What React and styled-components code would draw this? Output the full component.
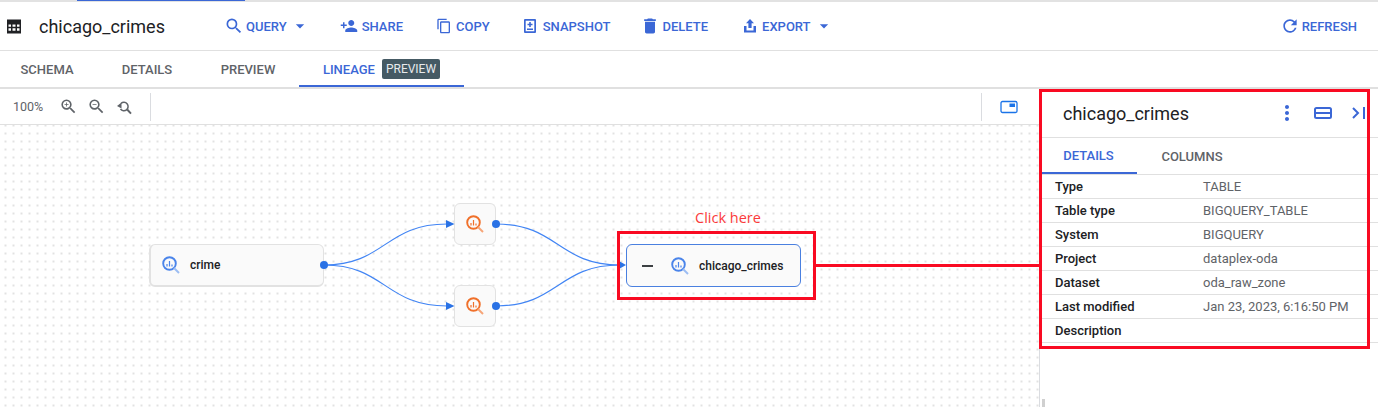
import React from 'react';
import styled, { createGlobalStyle } from 'styled-components';
import {
  MdSearch, MdPersonAdd, MdContentCopy, MdDelete, MdRefresh, MdArrowDropDown,
  MdZoomIn, MdZoomOut, MdMoreVert,
} from 'react-icons/md';

const BLUE = '#3b67d6';
const RED = '#f90a22';

const GlobalStyle = createGlobalStyle`
  html, body { margin: 0; padding: 0; background: #fff; }
  body { font-family: Roboto, "Liberation Sans", sans-serif; overflow: hidden; }
`;

const Page = styled.div`
  width: 1378px;
  height: 407px;
  display: flex;
  flex-direction: column;
  position: relative;
  overflow: hidden;
`;

const TopLine = styled.div`
  height: 2px;
  background: #e2e2e2;
  flex: none;
  &::before {
    content: '';
    display: block;
    width: 168px;
    height: 1px;
    margin-left: 77px;
    background: ${BLUE};
  }
`;

const Toolbar = styled.div`
  height: 48px;
  flex: none;
  display: flex;
  align-items: center;
  border-bottom: 1px solid #e0e0e0;
  padding-left: 7px;
  padding-right: 21px;
`;

const Title = styled.h1`
  margin: 0 60px 0 18px;
  font-size: 18px;
  font-weight: 400;
  color: #202124;
  width: 125px;
  white-space: nowrap;
`;

const ActionBtn = styled.div`
  display: flex;
  align-items: center;
  gap: ${p => p.$gap ?? 2}px;
  color: ${BLUE};
  font-size: 13px;
  font-weight: 500;
  margin-right: ${p => p.$mr ?? 0}px;
  margin-left: ${p => (p.$push ? 'auto' : '0')};
  svg { flex: none; }
`;

const Caret = styled(MdArrowDropDown)`
  margin-left: ${p => p.$ml ?? 1}px;
`;

const Tabs = styled.div`
  height: 36px;
  flex: none;
  display: flex;
  border-bottom: 2px solid #e0e0e0;
`;

const Tab = styled.div`
  height: 36px;
  box-sizing: border-box;
  width: ${p => p.$w}px;
  margin-right: ${p => p.$mr ?? 0}px;
  display: flex;
  align-items: center;
  justify-content: center;
  gap: 7px;
  font-size: 13px;
  font-weight: 500;
  color: ${p => (p.$active ? BLUE : '#5f6368')};
  border-bottom: ${p => (p.$active ? `2px solid ${BLUE}` : 'none')};
  padding-top: ${p => (p.$active ? '2px' : '0')};
`;

const Badge = styled.span`
  background: #455a64;
  color: #e8eaed;
  font-size: 12px;
  font-weight: 400;
  padding: 0 4px;
  height: 20px;
  line-height: 20px;
  border-radius: 2px;
`;

const Body = styled.div`
  flex: 1;
  display: flex;
  min-height: 0;
`;

const Main = styled.div`
  width: 1039px;
  flex: none;
  display: flex;
  flex-direction: column;
`;

const CanvasBar = styled.div`
  height: 35px;
  flex: none;
  display: flex;
  align-items: center;
  border-bottom: 1px solid #e0e0e0;
  padding-left: 13px;
  color: #5f6368;
`;

const Zoom = styled.span`
  font-size: 12.5px;
  color: #5f6368;
  width: 37px;
  margin-right: 4px;
`;

const IconSlot = styled.span`
  width: ${p => p.$w ?? 28}px;
  flex: none;
  display: flex;
  justify-content: center;
  align-items: center;
  margin-left: ${p => p.$ml ?? 0}px;
`;

const BarDivider = styled.span`
  width: 1px;
  height: 28px;
  background: #dadce0;
  margin-left: ${p => p.$ml}px;
`;

const Canvas = styled.div`
  flex: 1;
  position: relative;
  background-color: #fff;
  background-image: radial-gradient(circle at 1px 1px, #e2e2e2 0.9px, transparent 1.2px);
  background-size: 8px 8px;
  background-position: 4.5px -0.5px;
`;

const Node = styled.div`
  position: absolute;
  left: ${p => p.$x}px;
  top: ${p => p.$y}px;
  width: ${p => p.$w}px;
  height: ${p => p.$h}px;
  box-sizing: border-box;
  background: #fafafa;
  border: 1px solid ${p => (p.$selected ? '#4a80e0' : '#e2e2e2')};
  border-bottom-width: ${p => (p.$raised ? 2 : 1)}px;
  border-left-width: ${p => (p.$raised ? 2 : 1)}px;
  border-radius: 6px;
  display: flex;
  align-items: center;
  justify-content: ${p => (p.$center ? 'center' : 'flex-start')};
  font-size: 12px;
  font-weight: 500;
  color: #202124;
`;

const NodeLabel = styled.span`
  margin-left: 10px;
`;

const CrimeIconBox = styled.span`
  display: flex;
  margin-left: 11px;
`;

const Collapse = styled.span`
  width: 11px;
  height: 2px;
  background: #3c4043;
  margin: 0 18px 0 15px;
  flex: none;
`;

const Edges = styled.svg`
  position: absolute;
  left: 0;
  top: 0;
  pointer-events: none;
`;

const Side = styled.aside`
  flex: 1;
  border-left: 1px solid #dadce0;
  display: flex;
  flex-direction: column;
  position: relative;
`;

const SideHead = styled.div`
  height: 49px;
  box-sizing: border-box;
  flex: none;
  display: flex;
  align-items: center;
  border-bottom: 1px solid #e0e0e0;
  padding-left: 23px;
`;

const SideTitle = styled.h2`
  margin: 0;
  font-size: 18px;
  font-weight: 400;
  color: #202124;
  width: 212px;
  flex: none;
`;

const SideTabs = styled.div`
  height: 37px;
  box-sizing: border-box;
  flex: none;
  display: flex;
  border-bottom: 1px solid #e0e0e0;
`;

const SideTab = styled.div`
  width: ${p => p.$w}px;
  height: 36px;
  box-sizing: border-box;
  display: flex;
  align-items: center;
  justify-content: center;
  font-size: 13px;
  font-weight: 500;
  color: ${p => (p.$active ? BLUE : '#5f6368')};
  border-bottom: ${p => (p.$active ? `2px solid ${BLUE}` : 'none')};
`;

const Row = styled.div`
  height: 24px;
  box-sizing: border-box;
  display: flex;
  align-items: center;
  border-bottom: 1px solid #e0e0e0;
  padding-left: 15px;
  font-size: 13px;
`;

const RowKey = styled.span`
  width: 148px;
  flex: none;
  font-weight: 500;
  color: #202124;
`;

const RowValue = styled.span`
  color: #5f6368;
`;

const Scrollbit = styled.div`
  position: absolute;
  left: 2px;
  bottom: 0;
  width: 3px;
  height: 8px;
  background: #d0d0d0;
`;

/* red annotations sit over the screenshot */
const RedBox = styled.div`
  position: absolute;
  left: ${p => p.$x}px;
  top: ${p => p.$y}px;
  width: ${p => p.$w}px;
  height: ${p => p.$h}px;
  box-sizing: border-box;
  border: 3px solid ${RED};
`;

const RedLine = styled.div`
  position: absolute;
  left: 816px;
  top: 264px;
  width: 224px;
  height: 3px;
  background: ${RED};
`;

const ClickHere = styled.div`
  position: absolute;
  left: 695px;
  top: 209px;
  font-family: "Open Sans", "Liberation Sans", sans-serif;
  font-size: 14.5px;
  line-height: 18px;
  color: #fb3a3a;
`;

const TableIcon = () => (
  <svg width="14" height="15" viewBox="0 0 14 15">
    <path fill="#202124" fillRule="evenodd" d="M0 0.500h14v14H0z M1.500 5.500v2.300H4V5.500z M5.500 5.500v2.300h3V5.500z M10 5.500v2.300h2.500V5.500z M1.500 9.300v2.500H4V9.300z M5.500 9.300v2.500h3V9.300z M10 9.300v2.500h2.500V9.300z" />
  </svg>
);

const SnapshotIcon = () => (
  <svg width="12" height="14" viewBox="0 0 12 14">
    <path fill={BLUE} fillRule="evenodd" d="M1 0h10a1 1 0 0 1 1 1v12a1 1 0 0 1-1 1H1a1 1 0 0 1-1-1V1a1 1 0 0 1 1-1z M1.700 1.700v10.600h8.600V1.700z" />
    <path fill={BLUE} d="M5.200 3h1.600v1.700h1.700v1.500H6.800v1.700H5.200V6.200H3.500V4.700h1.700z M3 9.500h6V11H3z" />
  </svg>
);

const ExportIcon = () => (
  <svg width="12" height="14" viewBox="0 0 12 14">
    <path fill={BLUE} d="M6 0l4 4.200H7.600v4.800H4.400V4.200H2z M0 7h2.500v4.500h7V7H12v6.500H0z" />
  </svg>
);

const ResetZoomIcon = () => (
  <svg width="18" height="18" viewBox="0 0 18 18" fill="none" stroke="#5f6368" strokeWidth="1.500">
    <path d="M6 5.500A4.200 4.200 0 1 1 5.500 11" />
    <path d="M12.200 11.500l3.800 4.200" strokeWidth="1.900" />
    <path fill="#5f6368" stroke="none" d="M2 8l4.500-3.500v6z" />
  </svg>
);

const PanelIcon = () => (
  <svg width="18" height="14" viewBox="0 0 18 14">
    <rect x="1" y="1.500" width="16" height="11" rx="1.500" fill="none" stroke="#1a73e8" strokeWidth="1.300" />
    <rect x="9.500" y="3.500" width="5.500" height="3.500" fill="#1a73e8" />
  </svg>
);

const SplitIcon = () => (
  <svg width="18" height="12" viewBox="0 0 18 12">
    <rect x="1" y="1" width="16" height="10" rx="1.500" fill="none" stroke={BLUE} strokeWidth="2" />
    <path d="M1 6h16" stroke={BLUE} strokeWidth="2" />
  </svg>
);

const CollapseIcon = () => (
  <svg width="13" height="12" viewBox="0 0 13 12" fill="none" stroke={BLUE} strokeWidth="2">
    <path d="M1 1l5 5-5 5" />
    <path d="M12 0v12" />
  </svg>
);

// magnifier with small bars, the lineage node glyph
const QueryIcon = ({ color, handle }) => (
  <svg width="18" height="18" viewBox="0 0 18 18" fill="none">
    <circle cx="7.500" cy="7.500" r="6.300" stroke={color} strokeWidth="1.900" />
    <path d="M12 12L17 17" stroke={handle} strokeWidth="2" />
    <path d="M5 8v2.500 M7.500 5v5.500 M10 8.500v2" stroke={color} strokeWidth="1.200" />
  </svg>
);

const ROWS = [
  ['Type', 'TABLE'],
  ['Table type', 'BIGQUERY_TABLE'],
  ['System', 'BIGQUERY'],
  ['Project', 'dataplex-oda'],
  ['Dataset', 'oda_raw_zone'],
  ['Last modified', 'Jan 23, 2023, 6:16:50 PM'],
  ['Description', ''],
];

const EDGE = '#4285f4';

export default function App() {
  return (
    <Page>
      <GlobalStyle />
      <TopLine />
      <Toolbar>
        <TableIcon />
        <Title>chicago_crimes</Title>
        <ActionBtn $mr={30}><MdSearch size={20} />QUERY<Caret size={20} /></ActionBtn>
        <ActionBtn $gap={4} $mr={33}><MdPersonAdd size={18} />SHARE</ActionBtn>
        <ActionBtn $gap={4} $mr={34}><MdContentCopy size={16} />COPY</ActionBtn>
        <ActionBtn $gap={7} $mr={30}><SnapshotIcon />SNAPSHOT</ActionBtn>
        <ActionBtn $mr={36}><MdDelete size={20} />DELETE</ActionBtn>
        <ActionBtn $gap={6}><ExportIcon />EXPORT<Caret size={20} $ml={-3} /></ActionBtn>
        <ActionBtn $push><MdRefresh size={20} />REFRESH</ActionBtn>
      </Toolbar>
      <Tabs>
        <Tab $w={94}>SCHEMA</Tab>
        <Tab $w={106}>DETAILS</Tab>
        <Tab $w={96} $mr={3}>PREVIEW</Tab>
        <Tab $w={165} $active>LINEAGE<Badge>PREVIEW</Badge></Tab>
      </Tabs>
      <Body>
        <Main>
          <CanvasBar>
            <Zoom>100%</Zoom>
            <IconSlot><MdZoomIn size={19} /></IconSlot>
            <IconSlot><MdZoomOut size={19} /></IconSlot>
            <IconSlot><ResetZoomIcon /></IconSlot>
            <BarDivider $ml={12} />
            <BarDivider $ml={830} />
            <IconSlot $ml={13}><PanelIcon /></IconSlot>
          </CanvasBar>
          <Canvas>
            <Node $x={149} $y={119} $w={175} $h={43} $raised>
              <CrimeIconBox><QueryIcon color="#4a84ea" handle="#9cbdf3" /></CrimeIconBox>
              <NodeLabel>crime</NodeLabel>
            </Node>
            <Node $x={454} $y={78} $w={42} $h={42} $center>
              <QueryIcon color="#f0702a" handle="#f6a578" />
            </Node>
            <Node $x={454} $y={160} $w={42} $h={42} $center>
              <QueryIcon color="#f0702a" handle="#f6a578" />
            </Node>
            <Node $x={626} $y={119} $w={175} $h={43} $selected>
              <Collapse />
              <QueryIcon color="#4a84ea" handle="#9cbdf3" />
              <NodeLabel>chicago_crimes</NodeLabel>
            </Node>
            <Edges width="1039" height="282" viewBox="0 0 1039 282" fill="none">
              <g stroke={EDGE} strokeWidth="1.200">
                <path d="M324 140 C 385 140, 385 99, 447 99" />
                <path d="M324 140 C 385 140, 385 181, 447 181" />
                <path d="M496 99 C 558 99, 558 140, 620 140" />
                <path d="M496 181 C 558 181, 558 140, 620 140" />
              </g>
              <g fill="#2a72e5">
                <circle cx="324" cy="140" r="4" />
                <circle cx="496" cy="99" r="4" />
                <circle cx="496" cy="181" r="4" />
                <path d="M446 95l8.500 4-8.500 4z" />
                <path d="M446 177l8.500 4-8.500 4z" />
                <path d="M619 136l7 4-7 4z" />
              </g>
            </Edges>
          </Canvas>
        </Main>
        <Side>
          <SideHead>
            <SideTitle>chicago_crimes</SideTitle>
            <MdMoreVert size={24} color={BLUE} />
            <IconSlot $ml={15} $w={18}><SplitIcon /></IconSlot>
            <IconSlot $ml={20} $w={13}><CollapseIcon /></IconSlot>
          </SideHead>
          <SideTabs>
            <SideTab $w={97} $active>DETAILS</SideTab>
            <SideTab $w={110}>COLUMNS</SideTab>
          </SideTabs>
          {ROWS.map(([k, v]) => (
            <Row key={k}>
              <RowKey>{k}</RowKey>
              <RowValue>{v}</RowValue>
            </Row>
          ))}
          <Scrollbit />
        </Side>
      </Body>
      <RedBox $x={617} $y={231} $w={199} $h={69} />
      <RedBox $x={1039} $y={89} $w={331} $h={260} />
      <RedLine />
      <ClickHere>Click here</ClickHere>
    </Page>
  );
}
